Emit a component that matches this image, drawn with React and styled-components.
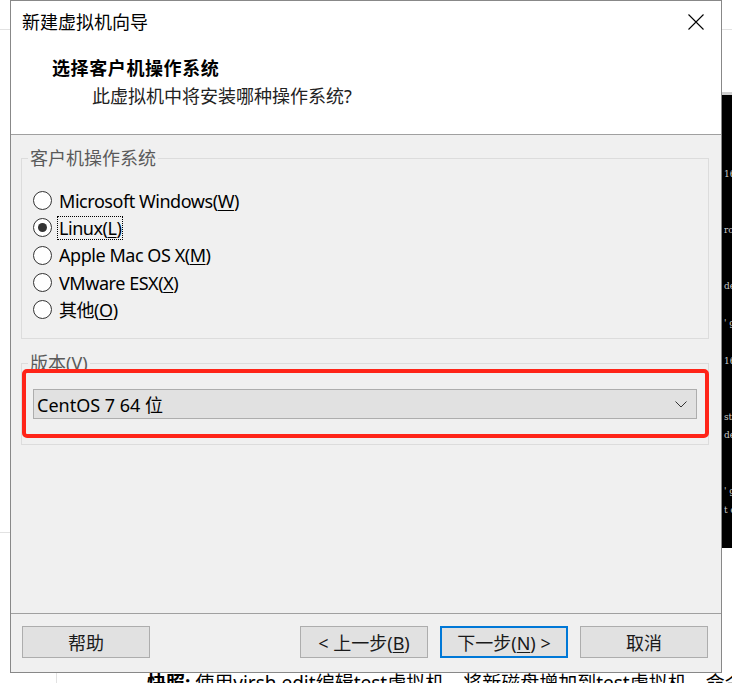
import styled, { createGlobalStyle } from "styled-components";

const Global = createGlobalStyle`
  html, body {
    margin: 0;
    padding: 0;
    background: #ffffff;
    overflow: hidden;
  }
  * { box-sizing: border-box; }
`;

const FONT = `"Noto Sans", "Noto Sans CJK SC", sans-serif`;

const Page = styled.div`
  width: 732px;
  height: 683px;
  display: grid;
  grid-template-columns: 10px 712px 10px;
  grid-template-rows: 673px 10px;
  font-family: ${FONT};
  overflow: hidden;
`;

const LeftEdge = styled.div`
  display: flex;
  flex-direction: column;
  .rule {
    height: 1px;
    background: #e2e2e2;
  }
`;

const RightEdge = styled.div`
  display: flex;
  flex-direction: column;
  overflow: hidden;
  .rule {
    height: 1px;
    background: #e2e2e2;
    margin-top: 29px;
  }
`;

const Terminal = styled.div`
  margin-top: 62px;
  height: 456px;
  background: #000;
  border-top: 3px solid #cfcfcf;
  padding-left: 2px;
  font-family: "DejaVu Serif", serif;
  font-size: 9px;
  color: #c8c8c8;
  white-space: pre;
  line-height: 1;
  div { height: 18.7px; }
`;

const Dialog = styled.div`
  border: 1px solid #888888;
  background: #f0f0f0;
  display: flex;
  flex-direction: column;
  height: 673px;
`;

const Header = styled.div`
  height: 134px;
  background: #ffffff;
  border-bottom: 1px solid #a0a0a0;
  padding: 9px 17px 0 11px;
`;

const TitleRow = styled.div`
  display: flex;
  justify-content: space-between;
  align-items: center;
  height: 24px;
`;

const Title = styled.div`
  font-size: 18px;
  line-height: 24px;
  color: #000;
`;

const Heading = styled.div`
  margin: 22px 0 0 30px;
  font-size: 18px;
  line-height: 24px;
  font-weight: 700;
  letter-spacing: 0.6px;
  color: #000;
`;

const SubHeading = styled.div`
  margin: 4px 0 0 70px;
  font-size: 18px;
  line-height: 24px;
  color: #222;
`;

const Body = styled.div`
  flex: 1;
  padding: 11px 12px 0 10px;
  display: flex;
  flex-direction: column;
`;

const Group = styled.fieldset`
  margin: ${(p) => p.$top || 0}px 0 0 0;
  padding: ${(p) => p.$pad};
  border: 1px solid #dcdcdc;
  min-width: 0;
  legend {
    padding: 0 2px;
    font-size: 18px;
    line-height: 24px;
    color: #5a5a5a;
  }
`;

const RadioList = styled.div`
  display: flex;
  flex-direction: column;
  margin-left: 5px;
`;

const RadioRow = styled.label`
  display: flex;
  align-items: center;
  height: 27.3px;
  gap: 6px;
  font-size: 18px;
  color: #000;
`;

const Circle = styled.span`
  width: 19px;
  height: 19px;
  border-radius: 50%;
  border: 1px solid #333;
  background: #fff;
  display: flex;
  align-items: center;
  justify-content: center;
  &::after {
    content: "";
    width: 9px;
    height: 9px;
    border-radius: 50%;
    background: ${(p) => (p.$on ? "#333" : "transparent")};
  }
`;

const RadioText = styled.span`
  line-height: 22px;
  padding: 0 1px;
  letter-spacing: -0.45px;
  outline: ${(p) => (p.$focus ? "1px dotted #000" : "none")};
  u { text-underline-offset: 2px; }
`;

const SelectWrap = styled.div`
  position: relative;
  margin: 0 11px 0 5px;
`;

const Select = styled.div`
  height: 30px;
  background: #e1e1e1;
  border: 1px solid #adadad;
  display: flex;
  align-items: center;
  justify-content: space-between;
  padding: 0 9px 0 3px;
  font-size: 18px;
  color: #000;
`;

const Highlight = styled.div`
  position: absolute;
  top: -20px;
  left: -11px;
  right: -12px;
  bottom: -19px;
  border: 4px solid #ff2418;
  border-radius: 5px;
  pointer-events: none;
`;

const Footer = styled.div`
  height: 59px;
  border-top: 1px solid #a0a0a0;
  display: flex;
  align-items: flex-start;
  padding: 12px 13px 0 11px;
  gap: 12px;
`;

const Button = styled.button`
  width: 128px;
  height: 32px;
  margin-right: ${(p) => (p.$push ? "auto" : "0")};
  background: #e1e1e1;
  border: ${(p) => (p.$primary ? "2px solid #0078d7" : "1px solid #adadad")};
  font-family: ${FONT};
  font-size: 18px;
  color: #1a1a1a;
  padding: 0;
  u { text-underline-offset: 2px; }
`;

const BottomText = styled.div`
  grid-column: 1 / 4;
  display: flex;
  overflow: hidden;
  .rule {
    width: 57px;
    border-right: 1px solid #e2e2e2;
    flex: none;
  }
  p {
    margin: 0 0 0 90px;
    font-size: 19px;
    line-height: 20px;
    white-space: nowrap;
    color: #000;
  }
  b { font-weight: 700; }
`;

const Chevron = () => (
  <svg width="12" height="7" viewBox="0 0 12 7">
    <polyline points="0.5,0.5 6,6 11.5,0.5" fill="none" stroke="#333" strokeWidth="1" />
  </svg>
);

const CloseIcon = () => (
  <svg width="16" height="16" viewBox="0 0 16 16">
    <path d="M0.5 0.5 L15.5 15.5 M15.5 0.5 L0.5 15.5" stroke="#000" strokeWidth="1.1" />
  </svg>
);

const options = [
  { pre: "Microsoft Windows(", key: "W", post: ")" },
  { pre: "Linux(", key: "L", post: ")", on: true },
  { pre: "Apple Mac OS X(", key: "M", post: ")" },
  { pre: "VMware ESX(", key: "X", post: ")" },
  { pre: "其他(", key: "O", post: ")" },
];

const termLines = ["", "", "", "", "16", "", "", "rou", "", "", "de", "", "' g", "", "16", "", "", "st", "de", "", "", "' g", "t q"];

export default function App() {
  return (
    <Page>
      <Global />
      <LeftEdge>
        <div className="rule" style={{ marginTop: 29 }} />
        <div className="rule" style={{ marginTop: 502 }} />
      </LeftEdge>
      <Dialog>
        <Header>
          <TitleRow>
            <Title>新建虚拟机向导</Title>
            <CloseIcon />
          </TitleRow>
          <Heading>选择客户机操作系统</Heading>
          <SubHeading>此虚拟机中将安装哪种操作系统?</SubHeading>
        </Header>
        <Body>
          <Group $pad="17px 0 15px 6px">
            <legend>客户机操作系统</legend>
            <RadioList>
              {options.map((o) => (
                <RadioRow key={o.key}>
                  <Circle $on={o.on} />
                  <RadioText $focus={o.on}>
                    {o.pre}
                    <u>{o.key}</u>
                    {o.post}
                  </RadioText>
                </RadioRow>
              ))}
            </RadioList>
          </Group>
          <Group $top={12} $pad="14px 0 25px 6px">
            <legend>版本(V)</legend>
            <SelectWrap>
              <Select>
                <span>CentOS 7 64 位</span>
                <Chevron />
              </Select>
              <Highlight />
            </SelectWrap>
          </Group>
        </Body>
        <Footer>
          <Button $push>帮助</Button>
          <Button>
            &lt; 上一步(<u>B</u>)
          </Button>
          <Button $primary>
            下一步(<u>N</u>) &gt;
          </Button>
          <Button>取消</Button>
        </Footer>
      </Dialog>
      <RightEdge>
        <div className="rule" />
        <Terminal>
          {termLines.map((t, i) => (
            <div key={i}>{t}</div>
          ))}
        </Terminal>
      </RightEdge>
      <BottomText>
        <div className="rule" />
        <p>
          <b>快照:</b> 使用virsh edit编辑test虚拟机，将新磁盘增加到test虚拟机，命令如下
        </p>
      </BottomText>
    </Page>
  );
}
